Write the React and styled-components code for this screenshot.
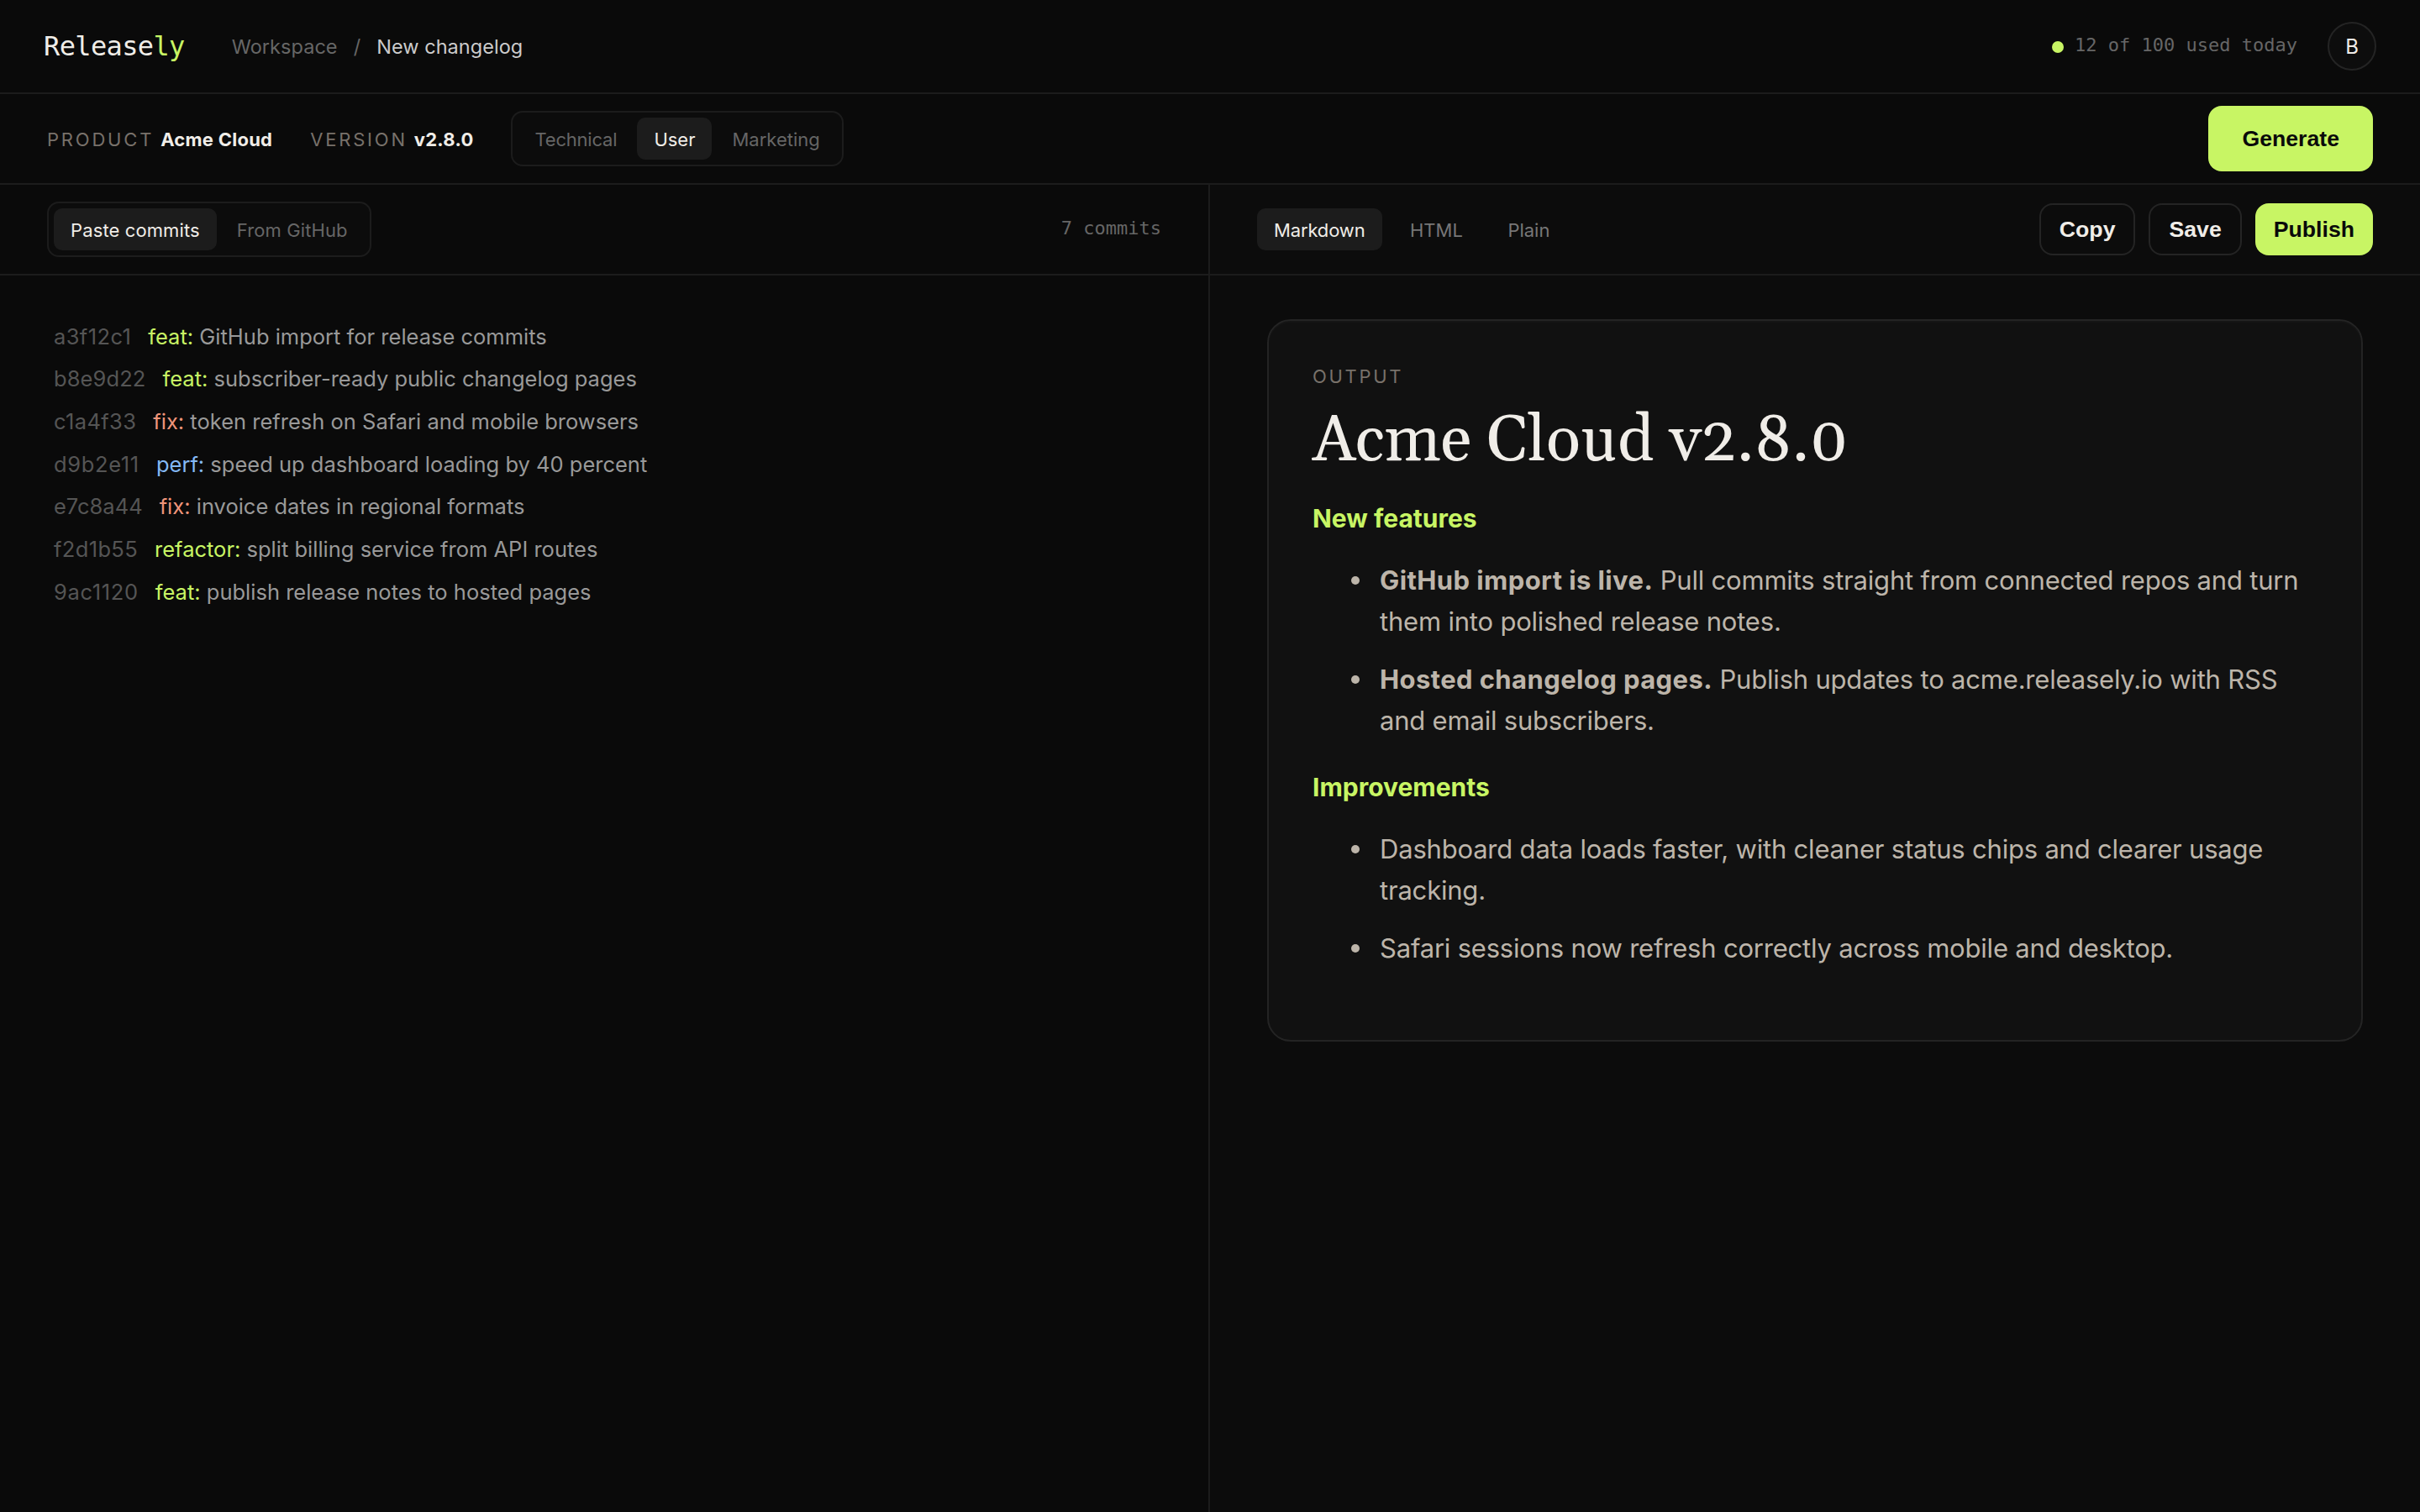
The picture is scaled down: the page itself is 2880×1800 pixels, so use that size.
import React from "react";
import styled, { createGlobalStyle } from "styled-components";

const c = {
  bg: "#0a0a0a",
  pane: "#0c0c0c",
  card: "#111111",
  line: "#1c1c1c",
  lineStrong: "#242424",
  raised: "#1c1c1c",
  lime: "#c8f564",
  text: "#f0ede8",
  body: "#bdb5aa",
  muted: "#666666",
  label: "#78716a",
  commit: "#999999",
  hash: "#555555",
};
const sans = `Inter, "Noto Sans", sans-serif`;
const mono = `"DejaVu Sans Mono", "Liberation Mono", monospace`;
const arial = `"Liberation Sans", Arial, sans-serif`;

const GlobalStyle = createGlobalStyle`
  *, *::before, *::after { box-sizing: border-box; }
  body {
    margin: 0;
    background: ${c.bg};
    color: ${c.text};
    font-family: ${sans};
    -webkit-font-smoothing: antialiased;
  }
`;

const Page = styled.div`
  display: grid;
  grid-template-rows: 112px 108px 1fr;
  height: 100vh;
  overflow: hidden;
`;

const Header = styled.header`
  display: flex;
  align-items: center;
  padding: 0 52px;
  border-bottom: 2px solid ${c.line};
`;

const Logo = styled.div`
  font: 400 32px/38px ${mono};
  letter-spacing: -0.64px;
  margin-right: 56px;
`;
const Accent = styled.span`
  color: ${c.lime};
`;

const Breadcrumb = styled.nav`
  display: flex;
  gap: 19px;
  padding-top: 2px;
  font-size: 23.5px;
  line-height: 30px;
  letter-spacing: 0.05px;
  color: ${c.muted};
`;
const Current = styled.span`
  color: #cccccc;
`;

const Usage = styled.div`
  display: flex;
  align-items: center;
  gap: 13px;
  margin-left: auto;
  margin-right: 36px;
  font: 400 22px/26px ${mono};
  color: ${c.muted};
`;
const UsageText = styled.span`
  padding-bottom: 2px;
`;
const Dot = styled.span`
  width: 14px;
  height: 14px;
  border-radius: 50%;
  background: ${c.lime};
  margin-top: 2px;
`;
const Avatar = styled.div`
  display: grid;
  place-items: center;
  width: 58px;
  height: 58px;
  border: 2px solid ${c.lineStrong};
  border-radius: 50%;
  background: #0d0d0d;
  font-size: 24px;
`;

const SettingsBar = styled.section`
  display: flex;
  align-items: center;
  gap: 45px;
  padding: 0 56px;
  border-bottom: 2px solid ${c.line};
`;
const Field = styled.div`
  display: flex;
  align-items: baseline;
  gap: 8px;
  font-size: 22px;
  line-height: 28px;
  padding-top: 1px;
`;
const Label = styled.span`
  font-size: 22px;
  letter-spacing: 2.8px;
  text-transform: uppercase;
  color: ${c.label};
`;
const Value = styled.span`
  font-weight: 700;
  letter-spacing: 0.25px;
`;

const Segments = styled.div`
  display: flex;
  gap: 4px;
  padding: 6px;
  border: 2px solid ${c.line};
  border-radius: 14px;
  background: #0c0c0c;
`;
const Tabs = styled.div`
  display: flex;
  gap: 13.5px;
`;
const Tab = styled.button`
  height: 50px;
  padding: 2px 20px 0;
  border: 0;
  border-radius: 10px;
  background: ${(p) => (p.$active ? c.raised : "transparent")};
  color: ${(p) => (p.$active ? c.text : p.$tone || c.muted)};
  font: 400 22px/28px ${sans};
  letter-spacing: ${(p) => p.$track || 0}px;
`;

const GenerateButton = styled.button`
  margin-left: auto;
  height: 78px;
  padding: 0 40px;
  border: 0;
  border-radius: 16px;
  background: ${c.lime};
  color: ${c.bg};
  font: 700 26.667px/30px ${arial};
`;

const Workspace = styled.main`
  display: grid;
  grid-template-columns: 1fr 1fr;
  min-height: 0;
`;
const Pane = styled.section`
  display: grid;
  grid-template-rows: 108px 1fr;
  ${(p) => (p.$left ? `border-right: 2px solid ${c.line};` : `background: ${c.pane};`)}
`;
const PaneBar = styled.div`
  display: flex;
  align-items: center;
  justify-content: space-between;
  padding: 0 56px;
  border-bottom: 2px solid ${c.line};
`;
const CommitCount = styled.span`
  font: 400 22px/26px ${mono};
  color: ${c.muted};
  padding-bottom: 2px;
`;

const CommitList = styled.div`
  padding: 47.6px 64px;
  font-size: 25.5px;
  line-height: 50.7px;
  color: ${c.commit};
`;
const Commit = styled.div`
  white-space: nowrap;
`;
const Hash = styled.span`
  color: ${c.hash};
  margin-right: 20px;
  letter-spacing: ${(p) => p.$track}px;
`;
const Kind = styled.span`
  color: ${(p) => p.$color};
`;

const Actions = styled.div`
  display: flex;
  gap: 16px;
`;
const ActionButton = styled.button`
  height: 62px;
  padding: 0 22px;
  border: ${(p) => (p.$primary ? "0" : `2px solid ${c.lineStrong}`)};
  border-radius: 16px;
  background: ${(p) => (p.$primary ? c.lime : "transparent")};
  color: ${(p) => (p.$primary ? c.bg : c.text)};
  font: 700 26.667px/30px ${arial};
`;

const Preview = styled.div`
  padding: 52px 68px;
`;
const Card = styled.article`
  padding: 52px 52px 49px;
  border: 2px solid ${c.lineStrong};
  border-radius: 28px;
  background: ${c.card};
  box-shadow: inset 0 2px 0 rgba(255, 255, 255, 0.02);
`;
const Overline = styled.div`
  font-size: 22px;
  line-height: 28px;
  letter-spacing: 2.7px;
  text-transform: uppercase;
  color: ${c.label};
`;
const Title = styled.h1`
  margin: 22px 0 31px;
  font: 400 76px/84px Gelasio, Georgia, "Liberation Serif", serif;
  font-variant-numeric: oldstyle-nums;
`;
const Heading = styled.h2`
  margin: 0;
  font-size: 30px;
  line-height: 36px;
  font-weight: 700;
  color: ${c.lime};
`;
const List = styled.ul`
  margin: 30.7px 0 36.3px;
  padding-left: 80px;
  list-style: none;
  font-size: 31px;
  line-height: 49.5px;
  letter-spacing: -0.2px;
  color: ${c.body};
`;
const Item = styled.li`
  &::before {
    content: "";
    display: inline-block;
    width: 10px;
    height: 10px;
    margin: 0 24px 0 -34px;
    border-radius: 50%;
    background: currentColor;
    vertical-align: 6px;
  }
  & + & {
    margin-top: 19px;
  }
`;
const Strong = styled.strong`
  font-weight: 700;
  letter-spacing: 0.4px;
`;

const kinds = { feat: c.lime, refactor: c.lime, fix: "#f0957a", perf: "#84b9f5" };
const commits = [
  { hash: "a3f12c1", track: 0.4, kind: "feat", message: "GitHub import for release commits" },
  { hash: "b8e9d22", track: 0.1, kind: "feat", message: "subscriber-ready public changelog pages" },
  { hash: "c1a4f33", track: 0.35, kind: "fix", message: "token refresh on Safari and mobile browsers" },
  { hash: "d9b2e11", track: 0.65, kind: "perf", message: "speed up dashboard loading by 40 percent" },
  { hash: "e7c8a44", track: 0, kind: "fix", message: "invoice dates in regional formats" },
  { hash: "f2d1b55", track: 0.35, kind: "refactor", message: "split billing service from API routes" },
  { hash: "9ac1120", track: 0.65, kind: "feat", message: "publish release notes to hosted pages" },
];

export default function App() {
  return (
    <>
      <GlobalStyle />
      <Page>
        <Header>
          <Logo>
            Release<Accent>ly</Accent>
          </Logo>
          <Breadcrumb>
            <span>Workspace</span>
            <span>/</span>
            <Current>New changelog</Current>
          </Breadcrumb>
          <Usage>
            <Dot />
            <UsageText>12 of 100 used today</UsageText>
          </Usage>
          <Avatar>B</Avatar>
        </Header>
        <SettingsBar>
          <Field>
            <Label>Product</Label>
            <Value>Acme Cloud</Value>
          </Field>
          <Field>
            <Label>Version</Label>
            <Value>v2.8.0</Value>
          </Field>
          <Segments>
            <Tab $track={-0.2}>Technical</Tab>
            <Tab $active>User</Tab>
            <Tab>Marketing</Tab>
          </Segments>
          <GenerateButton>Generate</GenerateButton>
        </SettingsBar>
        <Workspace>
          <Pane $left>
            <PaneBar>
              <Segments>
                <Tab $active $track={0.12}>Paste commits</Tab>
                <Tab $track={0.1}>From GitHub</Tab>
              </Segments>
              <CommitCount>7 commits</CommitCount>
            </PaneBar>
            <CommitList>
              {commits.map(({ hash, track, kind, message }) => (
                <Commit key={hash}>
                  <Hash $track={track}>{hash}</Hash>
                  <Kind $color={kinds[kind]}>{kind}:</Kind> {message}
                </Commit>
              ))}
            </CommitList>
          </Pane>
          <Pane>
            <PaneBar>
              <Tabs>
                <Tab $active $track={-0.15}>Markdown</Tab>
                <Tab $tone="#777777">HTML</Tab>
                <Tab $tone="#777777">Plain</Tab>
              </Tabs>
              <Actions>
                <ActionButton>Copy</ActionButton>
                <ActionButton>Save</ActionButton>
                <ActionButton $primary>Publish</ActionButton>
              </Actions>
            </PaneBar>
            <Preview>
              <Card>
                <Overline>Output</Overline>
                <Title>Acme Cloud v2.8.0</Title>
                <Heading>New features</Heading>
                <List>
                  <Item>
                    <Strong>GitHub import is live.</Strong> Pull commits straight from connected
                    repos and turn them into polished release notes.
                  </Item>
                  <Item>
                    <Strong>Hosted changelog pages.</Strong> Publish updates to acme.releasely.io
                    with RSS and email subscribers.
                  </Item>
                </List>
                <Heading>Improvements</Heading>
                <List>
                  <Item>
                    Dashboard data loads faster, with cleaner status chips and clearer usage
                    tracking.
                  </Item>
                  <Item>Safari sessions now refresh correctly across mobile and desktop.</Item>
                </List>
              </Card>
            </Preview>
          </Pane>
        </Workspace>
      </Page>
    </>
  );
}
